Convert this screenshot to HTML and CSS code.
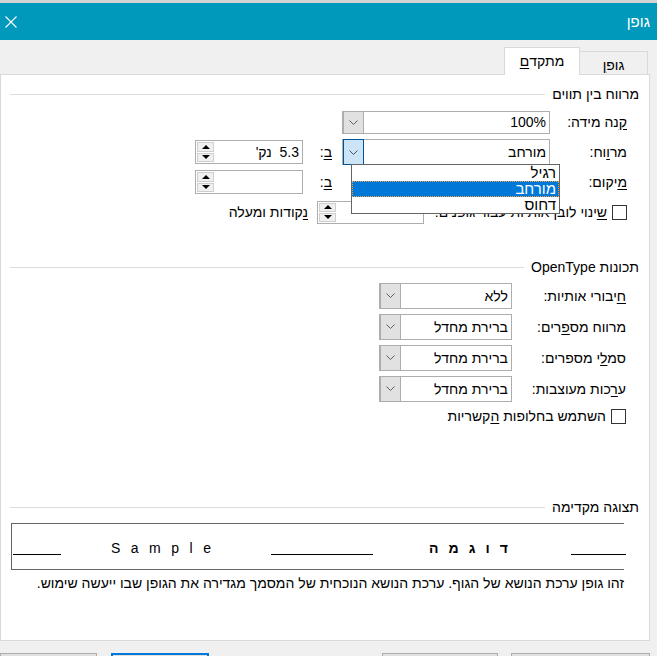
FILE: index.html
```html
<!DOCTYPE html>
<html lang="he" dir="rtl">
<head>
<meta charset="utf-8">
<title>גופן</title>
<link rel="stylesheet" href="styles.css">
</head>
<body>
<div class="titlebar">
  <span class="title">גופן</span>
  <svg class="close" width="12" height="12" viewBox="0 0 12 12"><path d="M0.5 0.5 L11.5 11.5 M11.5 0.5 L0.5 11.5" stroke="#fff" stroke-width="1.1" fill="none"/></svg>
</div>
<div class="tabs">
  <div class="tab">גופ<u>ן</u></div>
  <div class="tab active">מתקד<u>ם</u></div>
</div>
<div class="panel">
  <section class="group g1">
    <div class="group-head"><span>מרווח בין תווים</span><i class="rule"></i></div>
    <div class="row">
      <span class="lbl w77"><u>ק</u>נה מידה:</span>
      <div class="combo w208 h23"><span class="val">100%</span><span class="btn"><svg width="9" height="5" viewBox="0 0 9 5"><path d="M0.5 0.5 L4.5 4.5 L8.5 0.5" fill="none" stroke="#606060"/></svg></span></div>
    </div>
    <div class="row">
      <span class="lbl w77">מר<u>ו</u>וח:</span>
      <div class="combo w208 h26 focus"><span class="val">מורחב</span><span class="btn"><svg width="9" height="5" viewBox="0 0 9 5"><path d="M0.5 0.5 L4.5 4.5 L8.5 0.5" fill="none" stroke="#505050"/></svg></span>
        <ul class="droplist">
          <li>רגיל</li>
          <li class="sel">מורחב</li>
          <li>דחוס</li>
        </ul>
      </div>
      <span class="blbl"><u>ב</u>:</span>
      <div class="spin w108"><span class="field">5.3&nbsp; נק'</span><span class="arrows"><span><i class="up"></i></span><span><i class="down"></i></span></span></div>
    </div>
    <div class="row">
      <span class="lbl w77"><u>מ</u>יקום:</span>
      <span class="gap208"></span>
      <span class="blbl"><u>ב</u>:</span>
      <div class="spin w108"><span class="field"></span><span class="arrows"><span><i class="up"></i></span><span><i class="down"></i></span></span></div>
    </div>
    <div class="row">
      <span class="check"></span>
      <span class="kern-lbl"><u>ש</u>ינוי לובן אותיות עבור גופנים:</span>
      <div class="spin w107"><span class="field"></span><span class="arrows"><span><i class="up"></i></span><span><i class="down"></i></span></span></div>
      <span class="after"><u>נ</u>קודות ומעלה</span>
    </div>
  </section>

  <section class="group g2">
    <div class="group-head"><span>תכונות OpenType</span><i class="rule"></i></div>
    <div class="row">
      <span class="lbl w114"><u>ח</u>יבורי אותיות:</span>
      <div class="combo w133 h26"><span class="val">ללא</span><span class="btn"><svg width="9" height="5" viewBox="0 0 9 5"><path d="M0.5 0.5 L4.5 4.5 L8.5 0.5" fill="none" stroke="#606060"/></svg></span></div>
    </div>
    <div class="row">
      <span class="lbl w114">מרווח מס<u>פ</u>רים:</span>
      <div class="combo w133 h26"><span class="val">ברירת מחדל</span><span class="btn"><svg width="9" height="5" viewBox="0 0 9 5"><path d="M0.5 0.5 L4.5 4.5 L8.5 0.5" fill="none" stroke="#606060"/></svg></span></div>
    </div>
    <div class="row">
      <span class="lbl w114">סמ<u>ל</u>י מספרים:</span>
      <div class="combo w133 h26"><span class="val">ברירת מחדל</span><span class="btn"><svg width="9" height="5" viewBox="0 0 9 5"><path d="M0.5 0.5 L4.5 4.5 L8.5 0.5" fill="none" stroke="#606060"/></svg></span></div>
    </div>
    <div class="row">
      <span class="lbl w114">ע<u>ר</u>כות מעוצבות:</span>
      <div class="combo w133 h26"><span class="val">ברירת מחדל</span><span class="btn"><svg width="9" height="5" viewBox="0 0 9 5"><path d="M0.5 0.5 L4.5 4.5 L8.5 0.5" fill="none" stroke="#606060"/></svg></span></div>
    </div>
    <div class="row crow">
      <span class="check"></span>
      <span class="clbl">השתמש בחלופות <u>ה</u>קשריות</span>
    </div>
  </section>

  <section class="group g3">
    <div class="group-head"><span>תצוגה מקדימה</span><i class="rule"></i></div>
    <div class="preview">
      <div class="prow">
        <i class="uline l1"></i>
        <span class="spread latin"><span>S</span><span>a</span><span>m</span><span>p</span><span>l</span><span>e</span></span>
        <i class="uline l2"></i>
        <span class="spread heb"><span>ד</span><span>ו</span><span>ג</span><span>מ</span><span>ה</span></span>
        <i class="uline l3"></i>
      </div>
    </div>
    <p class="desc">זהו גופן ערכת הנושא של הגוף. ערכת הנושא הנוכחית של המסמך מגדירה את הגופן שבו ייעשה שימוש.</p>
  </section>
</div>
<div class="buttons">
  <span class="button b1"></span>
  <span class="button b2"></span>
  <span class="button b3 default"></span>
  <span class="button b4"></span>
</div>
</body>
</html>
```

FILE: styles.css
```css
* { box-sizing: border-box; }
html, body { margin: 0; padding: 0; }
body {
  width: 657px;
  height: 656px;
  overflow: hidden;
  background: #f0f0f0;
  font-family: "Liberation Sans", "DejaVu Sans", sans-serif;
  font-size: 14px;
  color: #000;
  direction: rtl;
}
u { text-decoration: underline; text-underline-offset: 2px; }

.titlebar {
  height: 40px;
  background: #0099bc;
  border-top: 3px solid #d3d3d3;
  display: flex;
  align-items: center;
  justify-content: space-between;
  padding: 0 7px 0 5px;
  color: #fff;
}
.title { font-size: 15px; }
.close { display: block; }

.tabs {
  height: 34px;
  display: flex;
  align-items: flex-end;
  padding-right: 9px;
}
.tab {
  height: 23px;
  width: 68px;
  border: 1px solid #d9d9d9;
  border-bottom: none;
  border-left: none;
  background: #f0f0f0;
  display: flex;
  align-items: center;
  justify-content: center;
  padding-top: 3px;
}
.tab.active {
  width: 76px;
  height: 28px;
  margin-bottom: -1px;
  background: #fff;
  border-left: 1px solid #d9d9d9;
  position: relative;
  z-index: 2;
  padding-top: 0;
  padding-bottom: 1px;
}

.panel {
  width: 650px;
  height: 567px;
  margin-right: 7px;
  background: #fff;
  border: 1px solid #d9d9d9;
  padding: 0 10px 0 9px;
  position: relative;
}

.group-head {
  display: flex;
  align-items: center;
  height: 16px;
}
.group-head span { flex: none; }
.group-head .rule {
  flex: 1;
  height: 1px;
  background: #dcdcdc;
  margin-right: 7px;
}
.g1 { padding-top: 11px; }
.g1 .group-head { margin-bottom: 5px; }
.g2 { margin-top: 32px; }
.g2 .group-head { margin-bottom: 5px; }
.g3 { margin-top: 71px; }

.row {
  display: flex;
  align-items: center;
  height: 30px;
}
.g1 .row { padding-right: 12px; }
.g2 .row { padding-right: 13px; height: 31px; }
.g2 .crow { height: 24px; }

.lbl { flex: none; white-space: nowrap; }
.w77 { width: 77px; }
.w114 { width: 114px; }

.combo {
  flex: none;
  display: flex;
  border: 1px solid #adadad;
  background: #fff;
  position: relative;
}
.w208 { width: 208px; }
.w133 { width: 133px; }
.h23 { height: 23px; }
.h26 { height: 26px; }
.gap208 { width: 208px; flex: none; }
.combo .val {
  flex: 1;
  display: flex;
  align-items: center;
  padding-right: 3px;
}
.combo .btn {
  flex: none;
  width: 21px;
  background: #e1e1e1;
  border: 1px solid #adadad;
  margin: -1px -1px -1px 0;
  display: flex;
  align-items: center;
  justify-content: center;
}
.combo .btn svg { display: block; }
.combo.focus .btn {
  background: #cce4f7;
  border-color: #005499;
}

.droplist {
  position: absolute;
  top: 100%;
  left: 8px;
  width: 209px;
  margin: 0;
  padding: 0;
  list-style: none;
  border: 1px solid #646464;
  background: #fff;
  z-index: 5;
}
.droplist li {
  height: 16px;
  line-height: 15px;
  padding-right: 3px;
  font-size: 15px;
}
.droplist li.sel {
  background: #0078d7;
  color: #fff;
  outline: 1px dotted #f0a040;
  outline-offset: -1px;
}

.blbl {
  flex: none;
  width: 39px;
  padding-right: 10px;
}

.spin {
  flex: none;
  display: flex;
  height: 24px;
  border: 1px solid #adadad;
  background: #fff;
}
.w108 { width: 108px; }
.w107 { width: 107px; height: 23px; }
.spin .field {
  flex: 1;
  display: flex;
  align-items: center;
  padding-right: 3px;
  white-space: pre;
}
.spin .arrows {
  flex: none;
  width: 19px;
  display: flex;
  flex-direction: column;
  padding: 1px;
  gap: 1px;
}
.spin .arrows > span {
  flex: 1;
  border: 1px solid #cfcfcf;
  background: #f0f0f0;
  display: flex;
  align-items: center;
  justify-content: center;
}
.up, .down {
  display: block;
  width: 0;
  height: 0;
  border-left: 4px solid transparent;
  border-right: 4px solid transparent;
}
.up { border-bottom: 4px solid #000; }
.down { border-top: 4px solid #000; }

.check {
  flex: none;
  width: 15px;
  height: 15px;
  border: 1px solid #333;
  background: #fff;
}
.kern-lbl {
  flex: none;
  width: 188px;
  padding-right: 5px;
  white-space: nowrap;
  overflow: hidden;
}
.after {
  flex: none;
  margin-right: 9px;
  white-space: nowrap;
}
.clbl {
  padding-right: 5px;
  white-space: nowrap;
}

.preview {
  margin-top: 8px;
  margin-left: 1px;
  margin-right: 15px;
  height: 47px;
  border: 1px solid #646464;
  border-right: none;
}
.prow {
  direction: ltr;
  display: flex;
  align-items: flex-end;
  height: 32px;
}
.uline {
  display: block;
  flex: none;
  height: 1px;
  background: #000;
  margin-bottom: 1px;
}
.l1 { width: 48px; margin-left: 1px; }
.l2 { width: 102px; margin-left: 60px; }
.l3 { width: 55px; margin-left: 63px; }
.spread {
  flex: none;
  display: flex;
  justify-content: space-between;
  font-size: 14px;
  line-height: 16px;
}
.latin { width: 100px; margin-left: 50px; }
.heb { width: 79px; margin-left: 56px; direction: rtl; font-weight: bold; }

.desc {
  margin: 5px 15px 0 0;
  line-height: 16px;
  white-space: nowrap;
}

.buttons {
  display: flex;
  margin-top: 12px;
  padding-right: 7px;
}
.button {
  flex: none;
  display: block;
  height: 24px;
  background: #e1e1e1;
  border: 1px solid #adadad;
}
.b1 { width: 139px; }
.b2 { width: 116px; margin-right: 13px; }
.b3 { width: 98px; margin-right: 173px; }
.b4 { width: 97px; margin-right: 14px; }
.button.default { border: 2px solid #0078d7; }
```
